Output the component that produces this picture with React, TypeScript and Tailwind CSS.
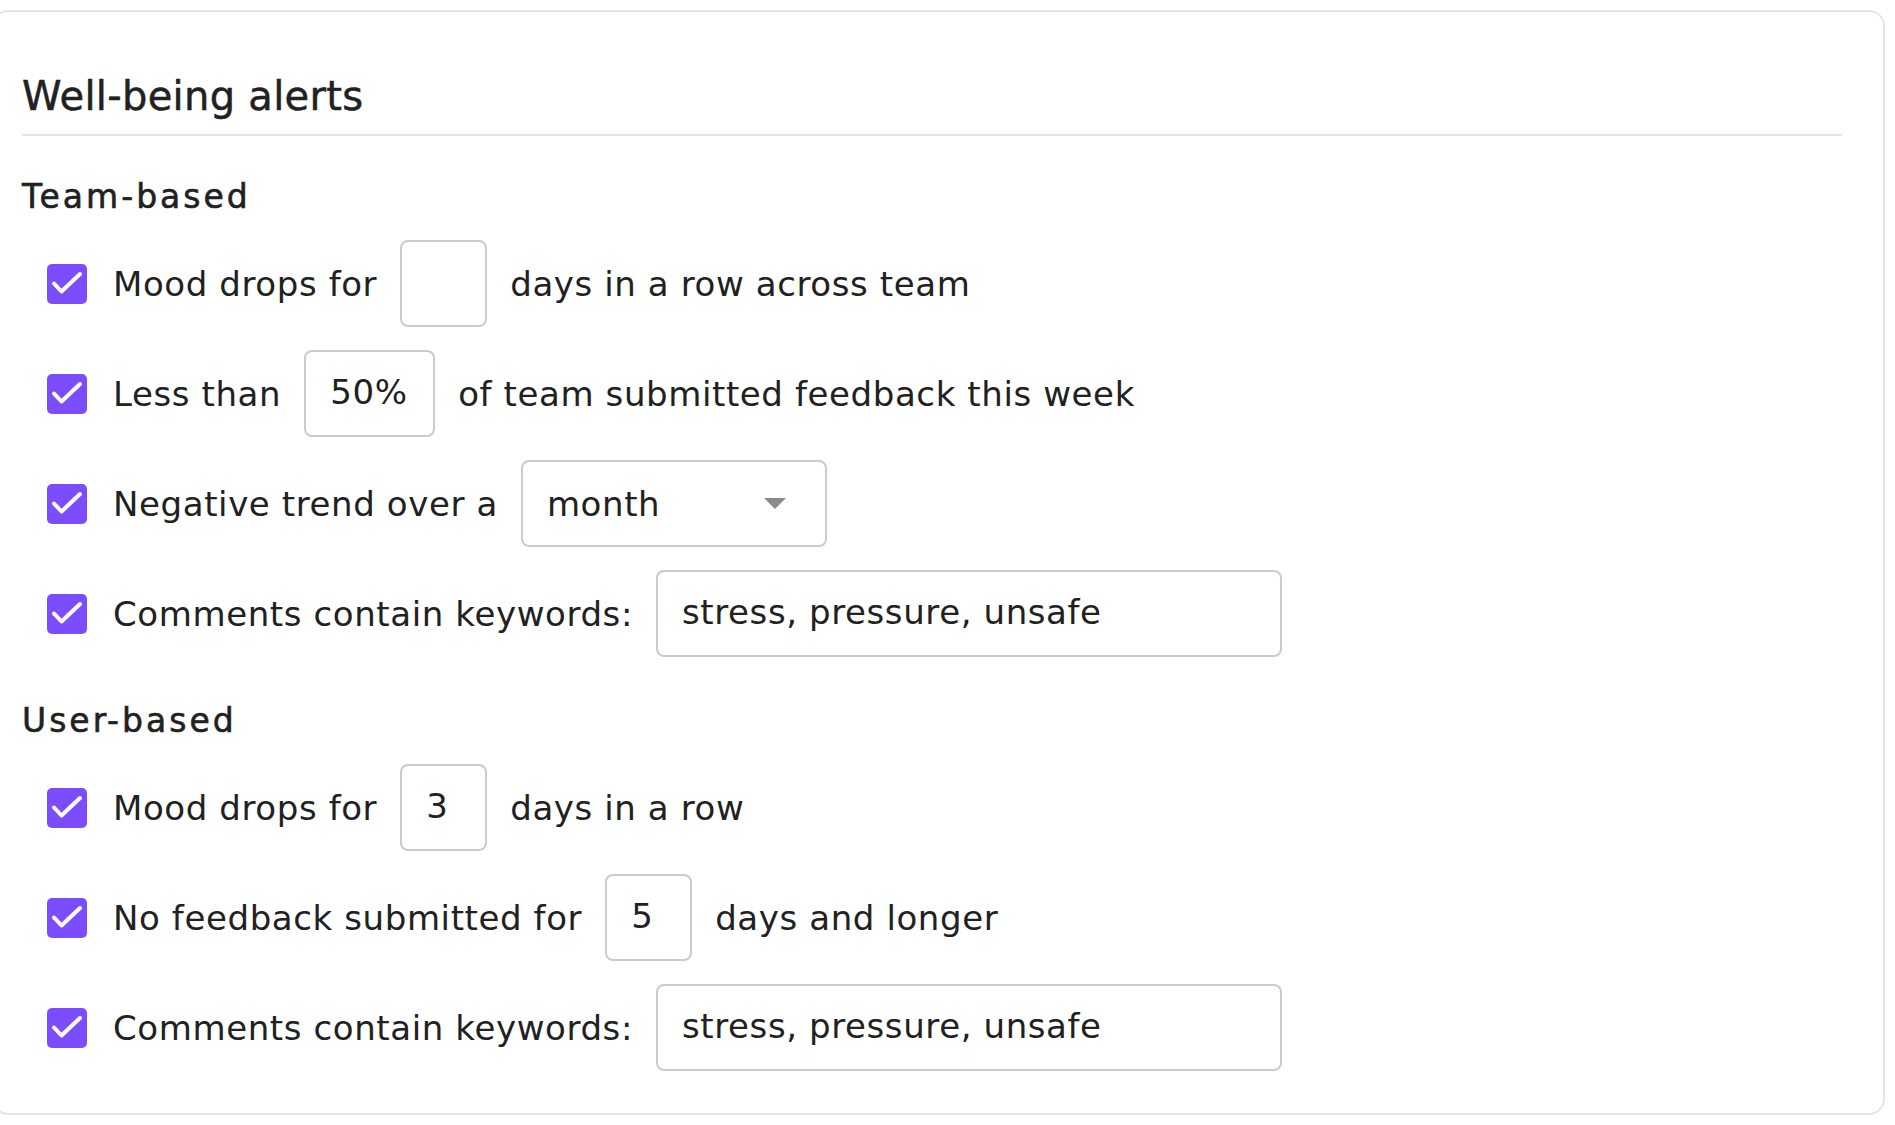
type Field =
  | { kind: 'input'; value: string; width: string }
  | { kind: 'select'; value: string; width: string };

interface AlertRule {
  id: string;
  label: string;
  field: Field;
  after?: string;
}

const teamRules: AlertRule[] = [
  {
    id: 'team-mood',
    label: 'Mood drops for',
    field: { kind: 'input', value: '', width: 'w-[87px]' },
    after: 'days in a row across team',
  },
  {
    id: 'team-feedback',
    label: 'Less than',
    field: { kind: 'input', value: '50%', width: 'w-[131px]' },
    after: 'of team submitted feedback this week',
  },
  {
    id: 'team-trend',
    label: 'Negative trend over a',
    field: { kind: 'select', value: 'month', width: 'w-[306px]' },
  },
  {
    id: 'team-keywords',
    label: 'Comments contain keywords:',
    field: { kind: 'input', value: 'stress, pressure, unsafe', width: 'w-[626px]' },
  },
];

const userRules: AlertRule[] = [
  {
    id: 'user-mood',
    label: 'Mood drops for',
    field: { kind: 'input', value: '3', width: 'w-[87px]' },
    after: 'days in a row',
  },
  {
    id: 'user-feedback',
    label: 'No feedback submitted for',
    field: { kind: 'input', value: '5', width: 'w-[87px]' },
    after: 'days and longer',
  },
  {
    id: 'user-keywords',
    label: 'Comments contain keywords:',
    field: { kind: 'input', value: 'stress, pressure, unsafe', width: 'w-[626px]' },
  },
];

const text = 'whitespace-nowrap text-[34px] leading-[40px] tracking-[0.6px] text-[#212121]';

function Checkbox() {
  return (
    <span className="flex h-[40px] w-[40px] shrink-0 items-center justify-center rounded-[5px] bg-[#7c4dff]">
      <svg width="40" height="40" viewBox="0 0 40 40" fill="none">
        <path
          d="M7 19.5L14.5 27.5L33 10"
          stroke="white"
          strokeWidth="4"
          strokeLinecap="round"
          strokeLinejoin="round"
        />
      </svg>
    </span>
  );
}

function RuleField({ field }: { field: Field }) {
  if (field.kind === 'select') {
    return (
      <div
        className={`flex h-[87px] ${field.width} shrink-0 items-center justify-between rounded-[8px] border-2 border-[#cbcbcb] bg-white pl-[24px] pr-[39px]`}
      >
        <span className={text}>{field.value}</span>
        <svg width="22" height="11" viewBox="0 0 22 11">
          <polygon points="0,0 22,0 11,11" fill="#8a8a8a" />
        </svg>
      </div>
    );
  }

  return (
    <input
      type="text"
      defaultValue={field.value}
      className={`h-[87px] ${field.width} shrink-0 rounded-[8px] border-2 border-[#cbcbcb] bg-white pb-[4px] pl-[24px] text-[34px] tracking-[0.6px] text-[#212121] outline-none`}
    />
  );
}

function RuleRow({ rule }: { rule: AlertRule }) {
  return (
    <div className="flex items-center">
      <Checkbox />
      <span className={`ml-[26px] ${text}`}>{rule.label}</span>
      <span className="ml-[23px] flex">
        <RuleField field={rule.field} />
      </span>
      {rule.after && <span className={`ml-[23px] ${text}`}>{rule.after}</span>}
    </div>
  );
}

function RuleGroup({ title, rules, first }: { title: string; rules: AlertRule[]; first?: boolean }) {
  return (
    <section>
      <h3
        className={`${first ? 'mt-[41px]' : 'mt-[44px]'} text-[33px] leading-[40px] tracking-[3px] text-[#212121] [-webkit-text-stroke:0.6px_#212121]`}
      >
        {title}
      </h3>
      <div className="mt-[23px] flex flex-col gap-[23px] pl-[25px]">
        {rules.map((rule) => (
          <RuleRow key={rule.id} rule={rule} />
        ))}
      </div>
    </section>
  );
}

export default function App() {
  return (
    <div className="min-h-screen bg-white pt-[10px] font-['DejaVu_Sans',sans-serif]">
      <div className="-ml-2 mr-[10px] rounded-[16px] border-2 border-[#e4e4e4] pb-[42px] pl-7 pr-[41px] pt-[60px]">
        <h2 className="border-b-2 border-[#e4e4e4] pb-[14px] text-[40px] leading-[48px] tracking-[0.3px] text-[#212121] [-webkit-text-stroke:0.5px_#212121]">
          Well-being alerts
        </h2>
        <RuleGroup title="Team-based" rules={teamRules} first />
        <RuleGroup title="User-based" rules={userRules} />
      </div>
    </div>
  );
}
